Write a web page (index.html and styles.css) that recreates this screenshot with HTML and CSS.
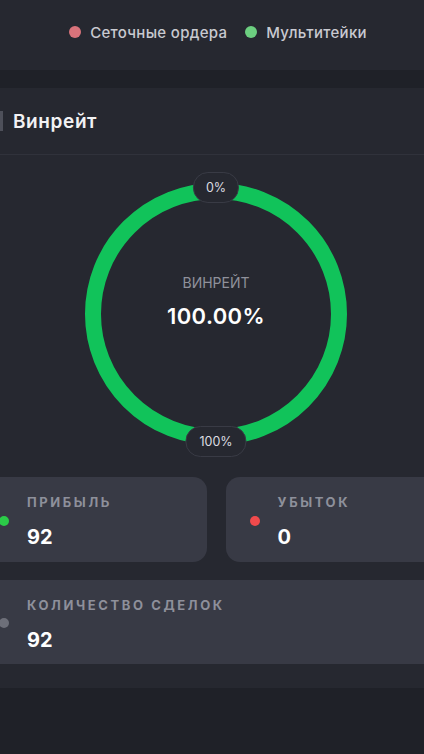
FILE: index.html
```html
<!DOCTYPE html>
<html lang="ru">
<head>
    <meta charset="UTF-8">
    <meta name="viewport" content="width=device-width, initial-scale=1.0">
    <title>Винрейт</title>
    <link rel="stylesheet" href="styles.css">
</head>
<body>
    <div class="page">
        <div class="legend-bar">
            <div class="legend">
                <span class="legend-item"><span class="legend-dot dot-grid"></span>Сеточные ордера</span>
                <span class="legend-item"><span class="legend-dot dot-multi"></span>Мультитейки</span>
            </div>
        </div>

        <div class="panel">
            <div class="panel-header">
                <span class="panel-mark"></span>
                <h2>Винрейт</h2>
            </div>

            <div class="donut">
                <svg width="262" height="262" viewBox="0 0 262 262">
                    <circle cx="131" cy="131" r="123" fill="none" stroke="#11c35a" stroke-width="16"/>
                </svg>
                <div class="donut-center">
                    <div class="donut-label">ВИНРЕЙТ</div>
                    <div class="donut-value">100.00%</div>
                </div>
                <span class="pill pill-top">0%</span>
                <span class="pill pill-bottom">100%</span>
            </div>

            <div class="stats">
                <div class="stat">
                    <span class="stat-dot dot-profit"></span>
                    <div>
                        <div class="stat-label">Прибыль</div>
                        <div class="stat-value">92</div>
                    </div>
                </div>
                <div class="stat">
                    <span class="stat-dot dot-loss"></span>
                    <div>
                        <div class="stat-label">Убыток</div>
                        <div class="stat-value">0</div>
                    </div>
                </div>
                <div class="stat stat-wide">
                    <span class="stat-dot dot-total"></span>
                    <div>
                        <div class="stat-label">Количество сделок</div>
                        <div class="stat-value">92</div>
                    </div>
                </div>
            </div>
        </div>
    </div>
</body>
</html>
```

FILE: styles.css
```css
body {
    margin: 0;
    background-color: #1f2128;
    font-family: Inter, "Noto Sans", sans-serif;
    color: #f1f1f3;
    overflow: hidden;
}
.page {
    width: 514px;
    margin-left: -41px;
}
.legend-bar {
    height: 70px;
    background-color: #262830;
    display: flex;
    justify-content: center;
    align-items: center;
    padding-bottom: 6px;
    box-sizing: border-box;
    margin-bottom: 18px;
}
.legend {
    display: flex;
    gap: 18px;
    font-size: 15px;
    font-weight: 500;
    letter-spacing: 0.3px;
    color: #c9cad0;
    margin-left: 4px;
}
.legend-item {
    display: flex;
    align-items: center;
}
.legend-dot {
    width: 12px;
    height: 12px;
    border-radius: 50%;
    margin-right: 9px;
}
.dot-grid {
    background-color: #d9737b;
}
.dot-multi {
    background-color: #6ccf80;
}
.panel {
    background-color: #262830;
    padding-bottom: 24px;
}
.panel-header {
    height: 66px;
    display: flex;
    align-items: center;
    border-bottom: 1px solid #30323b;
    padding-left: 41px;
}
.panel-mark {
    width: 3px;
    height: 20px;
    background-color: #4e505a;
    margin-right: 10px;
}
.panel-header h2 {
    margin: 0;
    font-size: 19px;
    font-weight: 600;
    letter-spacing: 0.6px;
    color: #f2f2f4;
}
.donut {
    position: relative;
    width: 262px;
    height: 262px;
    margin: 28px auto 0;
}
.donut svg {
    display: block;
}
.donut-center {
    position: absolute;
    inset: 0;
    display: flex;
    flex-direction: column;
    align-items: center;
    justify-content: center;
    padding-bottom: 26px;
    box-sizing: border-box;
}
.donut-label {
    font-size: 14px;
    color: #8f919b;
    margin-bottom: 12px;
}
.donut-value {
    font-size: 22px;
    font-weight: 600;
    letter-spacing: 0.4px;
    color: #ffffff;
}
.pill {
    position: absolute;
    left: 50%;
    transform: translateX(-50%);
    height: 29px;
    line-height: 29px;
    padding: 0 12px;
    border-radius: 15px;
    background-color: #262830;
    border: 1px solid #393b45;
    font-size: 12.5px;
    color: #dcdde1;
}
.pill-top {
    top: -11px;
}
.pill-bottom {
    bottom: -12px;
    padding: 0 13px;
}
.stats {
    display: grid;
    grid-template-columns: 1fr 1fr;
    gap: 18px 19px;
    padding: 0 16px;
    margin-top: 32px;
}
.stat {
    display: flex;
    align-items: center;
    height: 85px;
    background-color: #383a45;
    border-radius: 14px;
    padding: 4px 0 0 24px;
    box-sizing: border-box;
}
.stat-wide {
    grid-column: span 2;
    height: 84px;
    border-radius: 0;
}
.stat-dot {
    width: 10px;
    height: 10px;
    border-radius: 50%;
    margin-right: 18px;
    margin-top: -2px;
}
.dot-profit {
    background-color: #2bcb48;
}
.dot-loss {
    background-color: #f04a4c;
}
.dot-total {
    background-color: #6d6f79;
}
.stat-label {
    font-size: 13px;
    font-weight: 700;
    letter-spacing: 2.6px;
    text-transform: uppercase;
    color: #8e909b;
    margin-bottom: 15px;
}
.stat-value {
    font-size: 20px;
    font-weight: 700;
    color: #ffffff;
}
```
